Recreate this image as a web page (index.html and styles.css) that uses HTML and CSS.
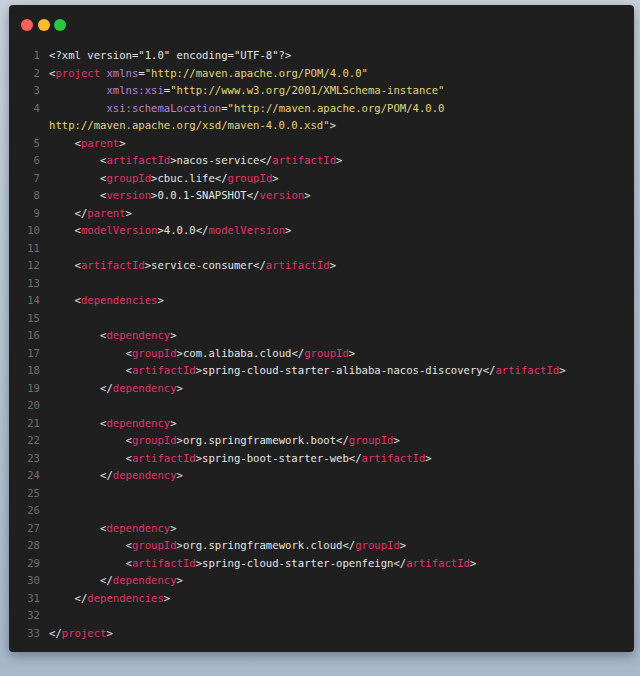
FILE: index.html
```html
<!DOCTYPE html>
<html>
  <head>
  <meta charset="utf-8">
  <title>pom.xml</title>
  <link rel="stylesheet" href="styles.css">
  </head>
  <body>
    <div class="window">
      <div class="titlebar">
        <span class="dot red"></span>
        <span class="dot yellow"></span>
        <span class="dot green"></span>
      </div>
      <div class="code">
        <span class="num">1</span><span class="ln">&lt;?xml version="1.0" encoding="UTF-8"?&gt;</span>
        <span class="num">2</span><span class="ln">&lt;<i class="tag">project</i> <i class="attr">xmlns</i>=<i class="val">"http://maven.apache.org/POM/4.0.0"</i></span>
        <span class="num">3</span><span class="ln">         <i class="attr">xmlns:xsi</i>=<i class="val">"http://www.w3.org/2001/XMLSchema-instance"</i></span>
        <span class="num">4</span><span class="ln">         <i class="attr">xsi:schemaLocation</i>=<i class="val">"http://maven.apache.org/POM/4.0.0</i></span>
        <span class="num"></span><span class="ln"><i class="val">http://maven.apache.org/xsd/maven-4.0.0.xsd"</i>&gt;</span>
        <span class="num">5</span><span class="ln">    &lt;<i class="tag">parent</i>&gt;</span>
        <span class="num">6</span><span class="ln">        &lt;<i class="tag">artifactId</i>&gt;nacos-service&lt;/<i class="tag">artifactId</i>&gt;</span>
        <span class="num">7</span><span class="ln">        &lt;<i class="tag">groupId</i>&gt;cbuc.life&lt;/<i class="tag">groupId</i>&gt;</span>
        <span class="num">8</span><span class="ln">        &lt;<i class="tag">version</i>&gt;0.0.1-SNAPSHOT&lt;/<i class="tag">version</i>&gt;</span>
        <span class="num">9</span><span class="ln">    &lt;/<i class="tag">parent</i>&gt;</span>
        <span class="num">10</span><span class="ln">    &lt;<i class="tag">modelVersion</i>&gt;4.0.0&lt;/<i class="tag">modelVersion</i>&gt;</span>
        <span class="num">11</span><span class="ln"> </span>
        <span class="num">12</span><span class="ln">    &lt;<i class="tag">artifactId</i>&gt;service-consumer&lt;/<i class="tag">artifactId</i>&gt;</span>
        <span class="num">13</span><span class="ln"> </span>
        <span class="num">14</span><span class="ln">    &lt;<i class="tag">dependencies</i>&gt;</span>
        <span class="num">15</span><span class="ln"> </span>
        <span class="num">16</span><span class="ln">        &lt;<i class="tag">dependency</i>&gt;</span>
        <span class="num">17</span><span class="ln">            &lt;<i class="tag">groupId</i>&gt;com.alibaba.cloud&lt;/<i class="tag">groupId</i>&gt;</span>
        <span class="num">18</span><span class="ln">            &lt;<i class="tag">artifactId</i>&gt;spring-cloud-starter-alibaba-nacos-discovery&lt;/<i class="tag">artifactId</i>&gt;</span>
        <span class="num">19</span><span class="ln">        &lt;/<i class="tag">dependency</i>&gt;</span>
        <span class="num">20</span><span class="ln"> </span>
        <span class="num">21</span><span class="ln">        &lt;<i class="tag">dependency</i>&gt;</span>
        <span class="num">22</span><span class="ln">            &lt;<i class="tag">groupId</i>&gt;org.springframework.boot&lt;/<i class="tag">groupId</i>&gt;</span>
        <span class="num">23</span><span class="ln">            &lt;<i class="tag">artifactId</i>&gt;spring-boot-starter-web&lt;/<i class="tag">artifactId</i>&gt;</span>
        <span class="num">24</span><span class="ln">        &lt;/<i class="tag">dependency</i>&gt;</span>
        <span class="num">25</span><span class="ln"> </span>
        <span class="num">26</span><span class="ln"> </span>
        <span class="num">27</span><span class="ln">        &lt;<i class="tag">dependency</i>&gt;</span>
        <span class="num">28</span><span class="ln">            &lt;<i class="tag">groupId</i>&gt;org.springframework.cloud&lt;/<i class="tag">groupId</i>&gt;</span>
        <span class="num">29</span><span class="ln">            &lt;<i class="tag">artifactId</i>&gt;spring-cloud-starter-openfeign&lt;/<i class="tag">artifactId</i>&gt;</span>
        <span class="num">30</span><span class="ln">        &lt;/<i class="tag">dependency</i>&gt;</span>
        <span class="num">31</span><span class="ln">    &lt;/<i class="tag">dependencies</i>&gt;</span>
        <span class="num">32</span><span class="ln"> </span>
        <span class="num">33</span><span class="ln">&lt;/<i class="tag">project</i>&gt;</span>
      </div>
    </div>
  </body>
</html>
```

FILE: styles.css
```css
body {
  margin: 0;
  height: 676px;
  background: linear-gradient(#c9d2da, #a7b8ca);
  font-family: "DejaVu Sans Mono", "Liberation Mono", monospace;
}

.window {
  margin: 5px 0 0 9px;
  width: 625px;
  height: 647px;
  box-sizing: border-box;
  background-color: #1f1f1f;
  border-radius: 4px;
  box-shadow: 0 4px 12px rgba(40, 55, 75, 0.45);
  padding: 14px 0 10px 0;
}

.titlebar {
  display: flex;
  gap: 4.5px;
  padding-left: 12px;
  height: 12px;
}

.dot {
  width: 12px;
  height: 12px;
  border-radius: 50%;
}
.red { background-color: #fe5f57; }
.yellow { background-color: #febb2e; }
.green { background-color: #29c840; }

.code {
  display: grid;
  grid-template-columns: 22px 1fr;
  column-gap: 9px;
  padding: 16px 8px 0 9px;
  font-size: 10.6px;
  line-height: 17.5px;
  color: #e4e4e4;
}

.num {
  text-align: right;
  color: #6e6e6e;
}

.ln {
  white-space: pre;
}

.ln i {
  font-style: normal;
}
.tag { color: #e3306c; }
.attr { color: #b77fdc; }
.val { color: #e3d47c; }
```
